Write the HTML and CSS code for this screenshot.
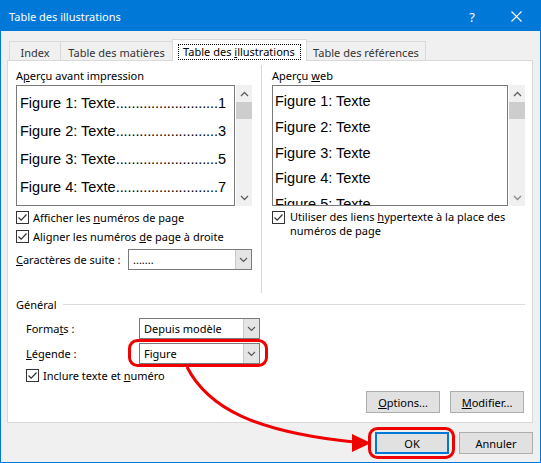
FILE: index.html
```html
<!DOCTYPE html>
<html lang="fr">
<head>
<meta charset="utf-8">
<title>Table des illustrations</title>
<link rel="stylesheet" href="styles.css">
</head>
<body>
<div class="window">
  <header class="titlebar">
    <span class="title">Table des illustrations</span>
    <span class="help">?</span>
    <svg class="close" width="11" height="11" viewBox="0 0 11 11"><path d="M0.5 0.5 L10.5 10.5 M10.5 0.5 L0.5 10.5" stroke="#fff" stroke-width="1.1" fill="none"/></svg>
  </header>
  <main class="body">
    <nav class="tabs">
      <div class="tab t-index">Index</div>
      <div class="tab t-mat">Table des matières</div>
      <div class="tab active"><span class="focus">Table des <u>i</u>llustrations</span></div>
      <div class="tab t-ref">Table des références</div>
    </nav>
    <section class="panel">
      <div class="top">
        <div class="col left">
          <div class="label">A<u>p</u>erçu avant impression</div>
          <div class="preview-row">
            <div class="preview print">
              <div class="entry"><span>Figure 1: Texte</span><span class="lead">..........................</span><span>1</span></div>
              <div class="entry"><span>Figure 2: Texte</span><span class="lead">..........................</span><span>3</span></div>
              <div class="entry"><span>Figure 3: Texte</span><span class="lead">..........................</span><span>5</span></div>
              <div class="entry"><span>Figure 4: Texte</span><span class="lead">..........................</span><span>7</span></div>
            </div>
            <div class="scrollbar">
              <div class="sb-btn"><svg width="9" height="6" viewBox="0 0 9 6"><path d="M1 5 L4.5 1.5 L8 5" stroke="#606060" stroke-width="1.3" fill="none"/></svg></div>
              <div class="sb-thumb"></div>
              <div class="sb-track"></div>
              <div class="sb-btn"><svg width="9" height="6" viewBox="0 0 9 6"><path d="M1 1 L4.5 4.5 L8 1" stroke="#606060" stroke-width="1.3" fill="none"/></svg></div>
            </div>
          </div>
          <div class="check-row">
            <span class="cb"><svg width="11" height="11" viewBox="0 0 11 11"><path d="M1.5 5.5 L4.2 8.2 L9.5 2.5" stroke="#333" stroke-width="1.2" fill="none"/></svg></span>
            <span>Afficher les <u>n</u>uméros de page</span>
          </div>
          <div class="check-row">
            <span class="cb"><svg width="11" height="11" viewBox="0 0 11 11"><path d="M1.5 5.5 L4.2 8.2 L9.5 2.5" stroke="#333" stroke-width="1.2" fill="none"/></svg></span>
            <span>Aligner les numéros <u>d</u>e page à droite</span>
          </div>
          <div class="field-row suite">
            <span class="field-label"><u>C</u>aractères de suite :</span>
            <div class="combo wide"><span class="combo-text">.......</span><span class="combo-btn"><svg width="9" height="6" viewBox="0 0 9 6"><path d="M1 1 L4.5 4.5 L8 1" stroke="#555" stroke-width="1.1" fill="none"/></svg></span></div>
          </div>
        </div>
        <div class="vsep"></div>
        <div class="col right">
          <div class="label">Aperçu <u>w</u>eb</div>
          <div class="preview-row">
            <div class="preview web">
              <div class="wline">Figure 1: Texte</div>
              <div class="wline">Figure 2: Texte</div>
              <div class="wline">Figure 3: Texte</div>
              <div class="wline">Figure 4: Texte</div>
              <div class="wline">Figure 5: Texte</div>
            </div>
            <div class="scrollbar">
              <div class="sb-btn"><svg width="9" height="6" viewBox="0 0 9 6"><path d="M1 5 L4.5 1.5 L8 5" stroke="#606060" stroke-width="1.3" fill="none"/></svg></div>
              <div class="sb-thumb"></div>
              <div class="sb-track"></div>
              <div class="sb-btn"><svg width="9" height="6" viewBox="0 0 9 6"><path d="M1 1 L4.5 4.5 L8 1" stroke="#8a8a8a" stroke-width="1.3" fill="none"/></svg></div>
            </div>
          </div>
          <div class="check-row multi">
            <span class="cb"><svg width="11" height="11" viewBox="0 0 11 11"><path d="M1.5 5.5 L4.2 8.2 L9.5 2.5" stroke="#333" stroke-width="1.2" fill="none"/></svg></span>
            <span>Utiliser des liens <u>h</u>ypertexte à la place des<br>numéros de page</span>
          </div>
        </div>
      </div>
      <div class="general">
        <div class="group-head"><span>Général</span><span class="hline"></span></div>
        <div class="group-body">
          <div class="field-row">
            <span class="field-label g">Forma<u>t</u>s :</span>
            <div class="combo narrow"><span class="combo-text">Depuis modèle</span><span class="combo-btn"><svg width="9" height="6" viewBox="0 0 9 6"><path d="M1 1 L4.5 4.5 L8 1" stroke="#555" stroke-width="1.1" fill="none"/></svg></span></div>
          </div>
          <div class="field-row legend">
            <span class="field-label g"><u>L</u>égende :</span>
            <div class="combo narrow"><span class="combo-text">Figure</span><span class="combo-btn"><svg width="9" height="6" viewBox="0 0 9 6"><path d="M1 1 L4.5 4.5 L8 1" stroke="#555" stroke-width="1.1" fill="none"/></svg></span></div>
          </div>
          <div class="check-row incl">
            <span class="cb"><svg width="11" height="11" viewBox="0 0 11 11"><path d="M1.5 5.5 L4.2 8.2 L9.5 2.5" stroke="#333" stroke-width="1.2" fill="none"/></svg></span>
            <span>Inclure texte et <u>n</u>uméro</span>
          </div>
          <div class="panel-buttons">
            <button class="btn"><u>O</u>ptions...</button>
            <button class="btn"><u>M</u>odifier...</button>
          </div>
        </div>
      </div>
    </section>
    <div class="dlg-buttons">
      <button class="btn ok">OK</button>
      <button class="btn">Annuler</button>
    </div>
  </main>
  <svg class="annot" width="541" height="463" viewBox="0 0 541 463">
    <rect x="129.5" y="340.5" width="137" height="25" rx="8" ry="8" fill="none" stroke="#f00000" stroke-width="3"/>
    <rect x="369.5" y="428.5" width="84" height="29" rx="8" ry="8" fill="none" stroke="#f00000" stroke-width="3"/>
    <path d="M187 367 C 208 408 255 432 354 442" fill="none" stroke="#f00000" stroke-width="3"/>
    <polygon points="352,434 371,443 352,452" fill="#f00000"/>
  </svg>
</div>
</body>
</html>
```

FILE: styles.css
```css
* { box-sizing: border-box; margin: 0; padding: 0; }
html, body { width: 541px; height: 463px; overflow: hidden; }
body {
  font-family: "Noto Sans", "Open Sans", sans-serif;
  font-size: 11px;
  color: #000;
  background: #f0f0f0;
}
u { text-decoration: underline; text-underline-offset: 1px; }

.window {
  position: relative;
  width: 541px;
  height: 463px;
  border: 1px solid #0078d7;
  background: #f0f0f0;
  display: flex;
  flex-direction: column;
}

.titlebar {
  height: 30px;
  flex: none;
  background: #0078d7;
  color: #fff;
  display: flex;
  align-items: center;
  padding: 0 18px 0 8px;
}
.title { flex: 1; font-size: 11px; padding-top: 1px; }
.help { font-size: 13px; margin-right: 36px; padding-top: 1px; }
.close { display: block; margin-top: 1px; }

.body {
  flex: 1;
  display: flex;
  flex-direction: column;
  padding: 8px 7px 8px 6px;
}

.tabs {
  height: 21px;
  flex: none;
  display: flex;
  align-items: flex-end;
  margin-left: 2px;
}
.tab {
  height: 19px;
  border: 1px solid #d9d9d9;
  border-bottom: none;
  background: #f0f0f0;
  color: #333;
  display: flex;
  align-items: center;
  justify-content: center;
  padding-top: 2px;
  margin-left: -1px;
  white-space: nowrap;
}
.t-index { width: 52px; margin-left: 0; }
.t-mat { width: 113px; }
.t-ref { width: 120px; }
.tab.active {
  width: 135px;
  height: 22px;
  background: #fff;
  color: #000;
  margin-bottom: -1px;
  position: relative;
  z-index: 1;
  padding-top: 2px;
}
.focus {
  border: 1px dotted #000;
  padding: 0 5px 1px 4px;
  line-height: 13px;
}

.panel {
  height: 363px;
  flex: none;
  background: #fff;
  border: 1px solid #d9d9d9;
  padding: 0 7px 0 8px;
  display: flex;
  flex-direction: column;
}

.top {
  height: 232px;
  display: flex;
}
.col { padding-top: 7px; }
.col.left { width: 236px; }
.col.right { width: 253px; }
.vsep {
  width: 1px;
  margin: 4px 10px 0 9px;
  background: #d7d7d7;
}

.label { height: 16px; line-height: 16px; white-space: nowrap; }

.preview-row {
  margin-top: 1px;
  height: 121px;
  display: flex;
  gap: 1px;
}
.preview {
  border: 1px solid #7a7a7a;
  background: #fff;
  overflow: hidden;
  font-family: "Liberation Sans", Arial, sans-serif;
  font-size: 14.5px;
  white-space: nowrap;
}
.preview.print { width: 219px; padding: 3px 8px 0 3px; line-height: 28px; }
.preview.web { width: 236px; padding: 3px 2px 0 2px; line-height: 25.8px; }
.entry { display: flex; }
.lead { flex: 1; text-align: right; letter-spacing: -0.1px; }

.scrollbar {
  width: 16px;
  background: #f0f0f0;
  display: flex;
  flex-direction: column;
}
.sb-btn {
  height: 17px;
  display: flex;
  align-items: center;
  justify-content: center;
}
.sb-btn svg { display: block; }
.sb-thumb { height: 17px; background: #cdcdcd; }
.sb-track { flex: 1; }

.check-row {
  display: flex;
  align-items: center;
  height: 16px;
  margin-top: 3px;
  white-space: nowrap;
}
.cb {
  width: 13px;
  height: 13px;
  flex: none;
  border: 1px solid #333;
  background: #fff;
  margin-right: 4px;
  display: flex;
  align-items: center;
  justify-content: center;
}
.cb svg { display: block; }
.check-row.multi {
  height: auto;
  align-items: flex-start;
  margin-top: 4px;
  line-height: 14px;
}
.check-row.multi .cb { margin-top: 1px; margin-right: 5px; }

.field-row {
  display: flex;
  align-items: center;
  height: 21px;
  white-space: nowrap;
}
.field-row.suite { margin-top: 5px; }
.field-label { width: 112px; flex: none; }
.field-label.g { width: 113px; }

.combo {
  height: 21px;
  border: 1px solid #7a7a7a;
  background: #fff;
  display: flex;
}
.combo.wide { width: 124px; }
.combo.narrow { width: 121px; }
.combo-text { flex: 1; padding-left: 4px; line-height: 19px; }
.combo-btn {
  width: 16px;
  background: #e5e5e5;
  border-left: 1px solid #c9c9c9;
  display: flex;
  align-items: center;
  justify-content: center;
}
.combo-btn svg { display: block; }

.general { display: flex; flex-direction: column; }
.group-head {
  margin-top: 3px;
  height: 16px;
  display: flex;
  align-items: center;
}
.hline { flex: 1; height: 1px; background: #dcdcdc; margin-left: 6px; }
.group-body { padding-left: 10px; display: flex; flex-direction: column; }
.group-body .field-row { margin-top: 6px; }
.group-body .field-row.legend { margin-top: 4px; }
.check-row.incl { margin-top: 3px; }

.panel-buttons {
  margin-top: 8px;
  display: flex;
  justify-content: flex-end;
  gap: 10px;
  margin-right: 1px;
}

.btn {
  width: 74px;
  height: 22px;
  border: 1px solid #adadad;
  background: #e1e1e1;
  font-family: "Noto Sans", "Open Sans", sans-serif;
  font-size: 11px;
  color: #000;
  display: flex;
  align-items: center;
  justify-content: center;
}
.btn.ok { border: 2px solid #0078d7; }

.dlg-buttons {
  margin-top: 9px;
  display: flex;
  justify-content: flex-end;
  gap: 10px;
}

.annot {
  position: absolute;
  left: -1px;
  top: -1px;
  pointer-events: none;
}
```
